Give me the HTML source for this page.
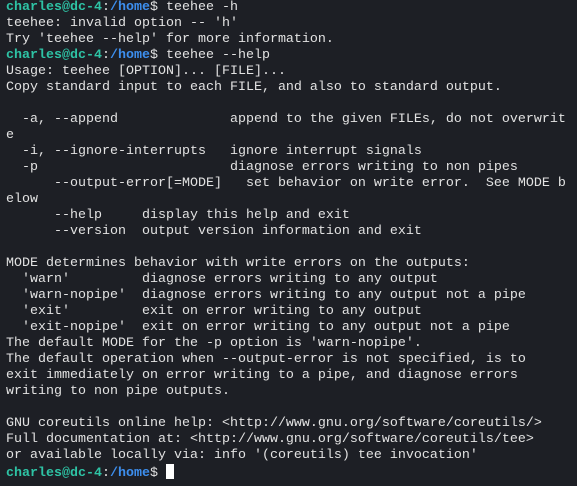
<!DOCTYPE html><html><head><style>
html,body{margin:0;padding:0;background:#1d1f25;width:577px;height:486px;overflow:hidden}
pre{margin:0;position:absolute;left:6px;top:0;font-family:"Liberation Mono",monospace;font-size:13.33px;line-height:16px;color:#e2e2e2;white-space:pre}
.g{color:#2ec3a5;font-weight:bold}.b{color:#3d8fef;font-weight:bold}
.c{display:inline-block;width:8px;height:15px;background:#fff;vertical-align:-3px}
</style></head><body><pre><span class="g">charles@dc-4</span>:<span class="b">/home</span>$ teehee -h
teehee: invalid option -- 'h'
Try 'teehee --help' for more information.
<span class="g">charles@dc-4</span>:<span class="b">/home</span>$ teehee --help
Usage: teehee [OPTION]... [FILE]...
Copy standard input to each FILE, and also to standard output.

  -a, --append              append to the given FILEs, do not overwrit
e
  -i, --ignore-interrupts   ignore interrupt signals
  -p                        diagnose errors writing to non pipes
      --output-error[=MODE]   set behavior on write error.  See MODE b
elow
      --help     display this help and exit
      --version  output version information and exit

MODE determines behavior with write errors on the outputs:
  'warn'         diagnose errors writing to any output
  'warn-nopipe'  diagnose errors writing to any output not a pipe
  'exit'         exit on error writing to any output
  'exit-nopipe'  exit on error writing to any output not a pipe
The default MODE for the -p option is 'warn-nopipe'.
The default operation when --output-error is not specified, is to
exit immediately on error writing to a pipe, and diagnose errors
writing to non pipe outputs.

GNU coreutils online help: &lt;http://www.gnu.org/software/coreutils/&gt;
Full documentation at: &lt;http://www.gnu.org/software/coreutils/tee&gt;
or available locally via: info '(coreutils) tee invocation'
<span class="g">charles@dc-4</span>:<span class="b">/home</span>$ <span class="c"></span></pre></body></html>
